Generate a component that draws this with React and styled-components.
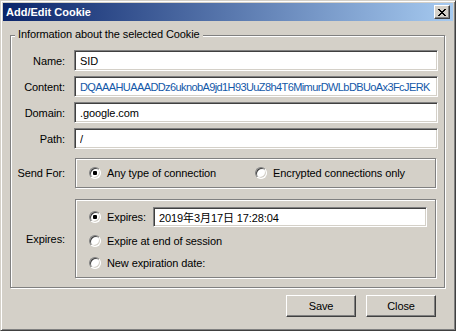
import React from 'react'
import styled, { createGlobalStyle } from 'styled-components'

const GlobalStyle = createGlobalStyle`
  html, body {
    margin: 0;
    padding: 0;
    background: #d4d0c8;
  }
  body {
    font-family: "Liberation Sans", "Noto Sans CJK JP", sans-serif;
    font-size: 11px;
    letter-spacing: -0.1px;
    color: #000;
  }
  * {
    box-sizing: border-box;
  }
`

const Window = styled.div`
  width: 456px;
  height: 331px;
  background: #d4d0c8;
  border: 1px solid;
  border-color: #d4d0c8 #404040 #404040 #d4d0c8;
  box-shadow: inset 1px 1px #fff, inset -1px -1px #808080;
  padding: 2px;
  display: flex;
  flex-direction: column;
`

const TitleBar = styled.div`
  height: 18px;
  display: flex;
  align-items: center;
  justify-content: space-between;
  padding: 0 3px 0 3px;
  background: linear-gradient(to right, #0a246a, #a6caf0);
`

const Title = styled.span`
  color: #fff;
  font-weight: bold;
  font-size: 11px;
  letter-spacing: 0;
`

const RaisedButton = styled.button`
  font: inherit;
  letter-spacing: inherit;
  color: #000;
  background: #d4d0c8;
  border: 1px solid;
  border-color: #fff #404040 #404040 #fff;
  box-shadow: inset -1px -1px #808080, inset 1px 1px #d4d0c8;
  padding: 0;
  display: flex;
  align-items: center;
  justify-content: center;
`

const CloseButton = styled(RaisedButton)`
  width: 16px;
  height: 14px;
`

const GroupBox = styled.div`
  position: relative;
  margin: 14px 8px 0 7px;
  padding: 14px 6px 9px 0;
  border: 1px solid #808080;
  box-shadow: inset 1px 1px #fff, 1px 1px #fff;
`

const Legend = styled.span`
  position: absolute;
  top: -8px;
  left: 4px;
  padding: 0 3px;
  line-height: 13px;
  background: #d4d0c8;
`

const Fields = styled.div`
  display: flex;
  flex-direction: column;
  gap: 5px;
`

const Field = styled.div`
  display: flex;
  align-items: center;
  margin-top: ${p => p.$top || 0}px;
`

const Label = styled.span`
  width: 54px;
  flex-shrink: 0;
  margin-right: 9px;
  text-align: right;
`

const TextBox = styled.input`
  font: inherit;
  letter-spacing: ${p => p.$tracking ?? -0.1}px;
  color: ${p => p.$color || '#000'};
  flex: 1;
  min-width: 0;
  height: ${p => p.$height || 21}px;
  padding: 0 2px 0 5px;
  background: #fff;
  border: 1px solid;
  border-color: #808080 #fff #fff #808080;
  box-shadow: inset 1px 1px #404040, inset -1px -1px #d4d0c8;
  outline: none;
`

const Frame = styled.div`
  flex: 1;
  margin: 0 2px 0 1px;
  border: 1px solid #808080;
  box-shadow: inset 1px 1px #fff, 1px 1px #fff;
`

const SendFrame = styled(Frame)`
  height: 30px;
  display: grid;
  grid-template-columns: 166px auto;
  align-items: center;
  padding-left: 13px;
`

const ExpiresFrame = styled(Frame)`
  display: flex;
  flex-direction: column;
  gap: 6px;
  padding: 7px 8px 6px 13px;
`

const Option = styled.label`
  display: flex;
  align-items: center;
  gap: 6px;
  height: 16px;
  width: ${p => (p.$width ? `${p.$width}px` : 'auto')};
  flex-shrink: 0;
  white-space: nowrap;
`

const Radio = styled.span`
  position: relative;
  width: 12px;
  height: 12px;
  flex-shrink: 0;
  border-radius: 50%;
  background: #fff;
  border: 1px solid;
  border-color: #808080 #fff #fff #808080;
  box-shadow: inset 1px 1px #404040, inset -1px -1px #d4d0c8;
  &::after {
    content: '';
    display: ${p => (p.$checked ? 'block' : 'none')};
    position: absolute;
    left: 3px;
    top: 3px;
    width: 4px;
    height: 4px;
    border-radius: 1px;
    background: #000;
  }
`

const ExpiresRow = styled.div`
  display: flex;
  align-items: center;
  height: 20px;
`

const Footer = styled.div`
  display: flex;
  justify-content: flex-end;
  gap: 10px;
  margin-top: 7px;
  padding-right: 17px;
`

const DialogButton = styled(RaisedButton)`
  width: 70px;
  height: 22px;
`

const CloseGlyph = () => (
  <svg width="8" height="7" viewBox="0 0 8 7" shapeRendering="crispEdges">
    <path
      fill="#000"
      d="M0 0h2v1H0zM6 0h2v1H6zM1 1h2v1H1zM5 1h2v1H5zM2 2h4v1H2zM3 3h2v1H3zM2 4h4v1H2zM1 5h2v1H1zM5 5h2v1H5zM0 6h2v1H0zM6 6h2v1H6z"
    />
  </svg>
)

export default function App () {
  return (
    <>
      <GlobalStyle />
      <Window>
        <TitleBar>
          <Title>Add/Edit Cookie</Title>
          <CloseButton aria-label='Close'>
            <CloseGlyph />
          </CloseButton>
        </TitleBar>
        <GroupBox>
          <Legend>Information about the selected Cookie</Legend>
          <Fields>
            <Field>
              <Label>Name:</Label>
              <TextBox readOnly value='SID' />
            </Field>
            <Field>
              <Label>Content:</Label>
              <TextBox
                readOnly
                $tracking={-0.6}
                $color='#1358a8'
                value='DQAAAHUAAADDz6uknobA9jd1H93UuZ8h4T6MimurDWLbDBUoAx3FcJERK'
              />
            </Field>
            <Field>
              <Label>Domain:</Label>
              <TextBox readOnly value='.google.com' />
            </Field>
            <Field>
              <Label>Path:</Label>
              <TextBox readOnly value='/' />
            </Field>
            <Field $top={4}>
              <Label>Send For:</Label>
              <SendFrame>
                <Option>
                  <Radio $checked />
                  Any type of connection
                </Option>
                <Option>
                  <Radio />
                  Encrypted connections only
                </Option>
              </SendFrame>
            </Field>
            <Field $top={6}>
              <Label>Expires:</Label>
              <ExpiresFrame>
                <ExpiresRow>
                  <Option $width={64}>
                    <Radio $checked />
                    Expires:
                  </Option>
                  <TextBox readOnly $height={20} value='2019年3月17日 17:28:04' />
                </ExpiresRow>
                <Option>
                  <Radio />
                  Expire at end of session
                </Option>
                <Option>
                  <Radio />
                  New expiration date:
                </Option>
              </ExpiresFrame>
            </Field>
          </Fields>
        </GroupBox>
        <Footer>
          <DialogButton>Save</DialogButton>
          <DialogButton>Close</DialogButton>
        </Footer>
      </Window>
    </>
  )
}
